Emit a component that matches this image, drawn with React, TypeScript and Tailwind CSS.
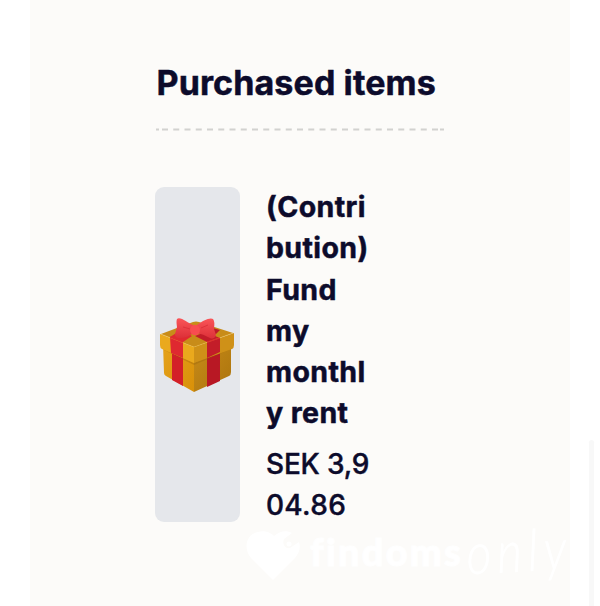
function GiftIcon() {
  return (
    <svg viewBox="0 0 100 100" className="ml-[5px] h-[100px] w-[100px] shrink-0" aria-label="Gift">
      <defs>
        <linearGradient id="boxLeft" x1="0" y1="0" x2="1" y2="1">
          <stop offset="0" stopColor="#e5a31c" />
          <stop offset="1" stopColor="#d99008" />
        </linearGradient>
        <linearGradient id="boxRight" x1="0" y1="0" x2="1" y2="1">
          <stop offset="0" stopColor="#c88b18" />
          <stop offset="1" stopColor="#ab740e" />
        </linearGradient>
        <linearGradient id="bow" x1="0" y1="0" x2="0" y2="1">
          <stop offset="0" stopColor="#fa5558" />
          <stop offset="1" stopColor="#dc3038" />
        </linearGradient>
      </defs>
      <path d="M13 39 L44 53 V87 L16 71 Q14 70 14 68 Z" fill="url(#boxLeft)" />
      <path d="M44 53 L81 39 V67 Q81 70 79 71 L44 87 Z" fill="url(#boxRight)" />
      <path d="M22 44 L33 49 V81 L22 75 Z" fill="#d32028" />
      <path d="M57 49 L70 43 V76 L57 82 Z" fill="#b81824" />
      <path d="M14 43 L44 58 L81 42 V44 L44 60 L14 45 Z" fill="#96600b" opacity=".35" />
      <path d="M11 29 L43 17 Q46 16 49 17 L83 28 L44 42 Z" fill="#c88c19" />
      <path d="M10 29 L44 42 V58 L12 44 Q10 43 10 40 Z" fill="#eaa91d" />
      <path d="M44 42 L84 28 V40 Q84 43 82 44 L44 58 Z" fill="#cf9118" />
      <path d="M20 32 L31 25 L42 31 L33 37 V53 L21 48 Z" fill="#df2930" />
      <path d="M55 27 L70 33 V47 L57 53 V37 L45 31 Z" fill="#c31d29" />
      <path d="M52 20 L70 25 L66 29 L53 26 Z" fill="#bd1927" />
      <path d="M11 29 L44 42 L83 28" fill="none" stroke="#f8c13a" strokeWidth=".6" opacity=".6" />
      <path d="M20 32 L33 37 M57 37 L70 33" stroke="#df2930" strokeWidth="1" />
      <path d="M43 20 C38 18 30 11 27 14 Q26 16 27 22 L25 29 Q25 33 29 33 Q38 33 43 28 Z" fill="url(#bow)" />
      <path d="M47 20 C52 16 60 12 63 14 Q65 16 64 24 L66 30 Q64 35 60 33 Q53 29 47 28 Z" fill="url(#bow)" />
      <path d="M33 22 L40 24 M51 23 L58 20" stroke="#d92d36" strokeWidth=".8" />
      <ellipse cx="45" cy="25" rx="5" ry="5.2" fill="#f84c50" />
    </svg>
  );
}

function Watermark() {
  return (
    <div className="pointer-events-none absolute left-[246px] top-[525px] flex h-[80px] w-[345px] text-white">
      <svg viewBox="0 0 56 58" className="h-[58px] w-[56px] shrink-0" fill="currentColor">
        <path d="M27 55 L5 33 C-3 24 0 9 12 7 C19 5 25 8 28 11 C34 6 40 5 46 8 L38 14 C36 19 39 24 44 23 L53 17 C55 23 53 28 49 33 Z" />
        <circle cx="43" cy="19" r="2.5" />
      </svg>
      <span className="ml-[8px] mt-[4px] w-[153px] whitespace-nowrap font-[Lato] text-[38px] font-black leading-[44px] tracking-[2.2px] [-webkit-text-stroke:1px_white]">
        findoms
      </span>
      <span className="ml-[4px] mt-[3px] origin-left -rotate-3 scale-y-[1.2] whitespace-nowrap font-[Lato,cursive] text-[48px] font-light italic leading-[54px] tracking-[6px] [-webkit-text-stroke:0.5px_white]">
        only
      </span>
    </div>
  );
}

export default function App() {
  return (
    <div className="relative h-[606px] w-[600px] overflow-hidden bg-white px-[30px] font-[Inter,sans-serif] text-[#0c0b2b]">
      <main className="h-full bg-[#fcfbf9] pl-[125px] pr-[125px] pt-[58px]">
        <h1 className="whitespace-nowrap pl-[1.5px] text-[34px] font-bold leading-[50px] tracking-[0.12px] [-webkit-text-stroke:0.5px_#0c0b2b]">Purchased items</h1>
        <svg className="mt-[20px] block h-[3px] w-[290px]" viewBox="0 0 290 3">
          <path d="M1 1.5 H4 M285 1.5 H289" stroke="#d2d2d0" strokeWidth="2" />
          <path d="M7 1.5 H284" stroke="#d2d2d0" strokeWidth="2" strokeDasharray="6 5.25" />
        </svg>
        <section className="mt-[56px] flex gap-[26px]">
          <div className="flex h-[335px] w-[85px] shrink-0 items-center justify-center overflow-hidden rounded-[9px] bg-[#e5e7eb]">
            <GiftIcon />
          </div>
          <div className="-mt-px w-[106px]">
            <h2 className="text-[28.5px] font-bold leading-[41.3px] tracking-[0.4px] [-webkit-text-stroke:0.5px_#0c0b2b]">
              (Contri<br />bution)<br />Fund<br />my<br />monthl<br />y rent
            </h2>
            <p className="mt-[10px] whitespace-nowrap text-[28px] font-medium leading-[41.3px] tracking-[-0.2px] [-webkit-text-stroke:0.4px_#0c0b2b]">
              SEK 3,9<br /><span className="tracking-[0.3px]">04.86</span>
            </p>
          </div>
        </section>
      </main>
      <div className="absolute bottom-0 left-[589px] h-[166px] w-[5px] rounded-t-sm bg-[#f8f8f8]" />
      <Watermark />
    </div>
  );
}
